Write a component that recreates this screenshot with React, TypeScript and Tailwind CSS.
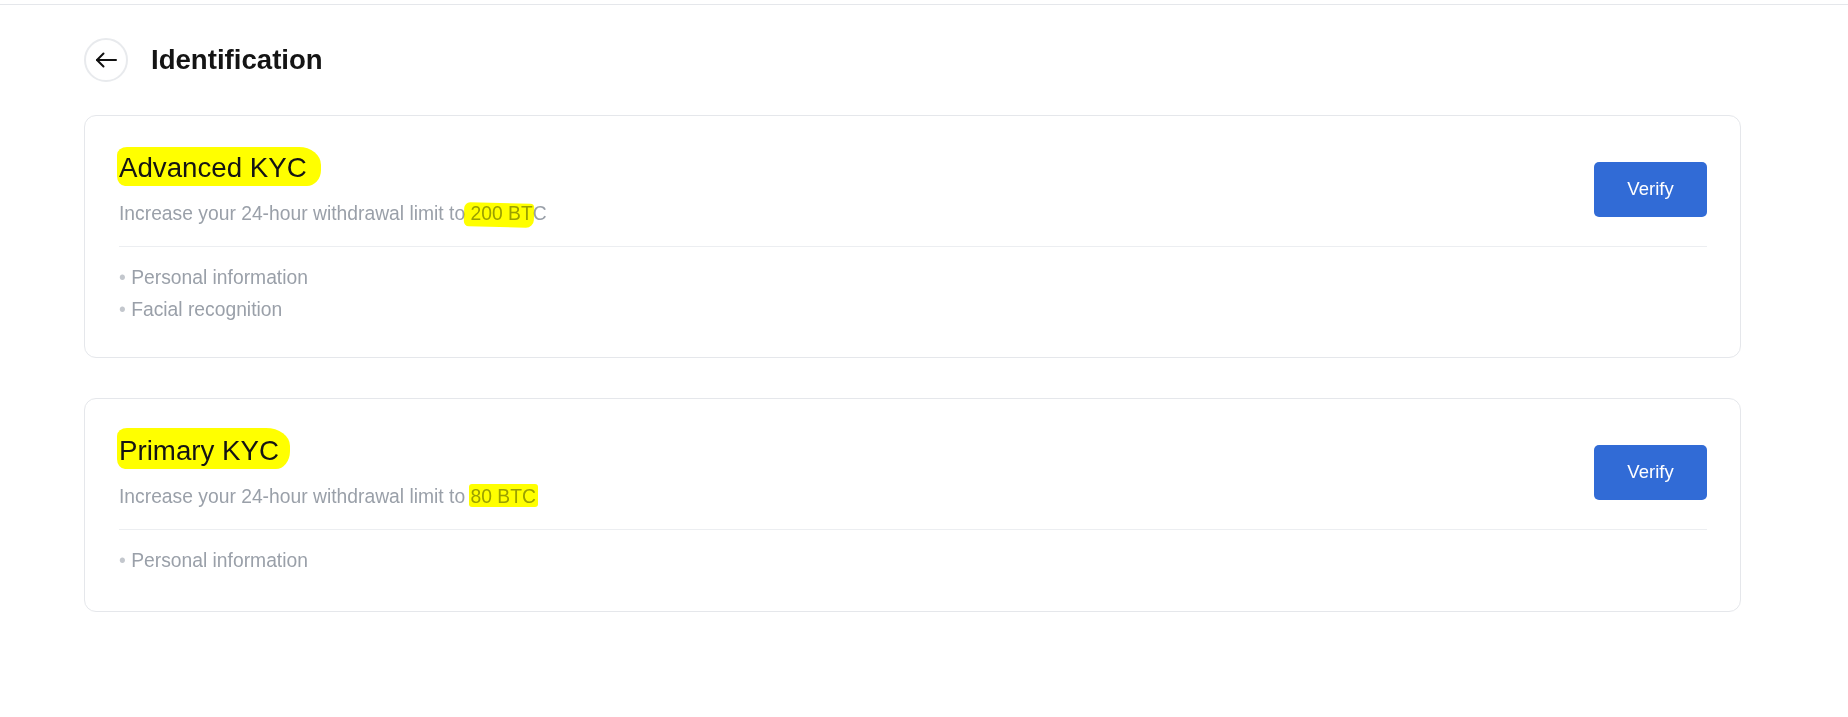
import React from "react";

type Hl = { left: number; top: number; width: number; height: number; radius: string; rotate?: number };

function Highlight({ h }: { h: Hl }) {
  return (
    <span
      className="pointer-events-none absolute bg-[#ffff00] mix-blend-multiply"
      style={{
        left: h.left,
        top: h.top,
        width: h.width,
        height: h.height,
        borderRadius: h.radius,
        transform: h.rotate ? `rotate(${h.rotate}deg)` : undefined,
      }}
    />
  );
}

type CardProps = {
  title: string;
  limit: string;
  items: string[];
  titleHl: Hl;
  limitHl: Hl;
  extraBottom?: boolean;
};

function KycCard({ title, limit, items, titleHl, limitHl, extraBottom }: CardProps) {
  return (
    <div
      className={
        "w-[1657px] rounded-[12px] border border-[#e5e7eb] bg-white pt-[36px] pl-[34px] pr-[33px] " +
        (extraBottom ? "pb-[34px]" : "pb-[31px]")
      }
    >
      <div className="flex items-center justify-between">
        <div>
          <div className="relative text-[27.7px] leading-[32px] text-[#141414]">
            <Highlight h={titleHl} />
            <span className="relative">{title}</span>
          </div>
          <div className="relative mt-[18px] text-[19.3px] leading-[24px] text-[#9aa0a9]">
            <Highlight h={limitHl} />
            <span>Increase your 24-hour withdrawal limit to {limit}</span>
          </div>
        </div>
        <button className="h-[55px] w-[113px] rounded-[5px] bg-[#316bd6] text-[18.5px] text-white">
          Verify
        </button>
      </div>
      <div className="mt-[20px] h-px bg-[#eceef1]" />
      <ul className="mt-[15px]">
        {items.map((it) => (
          <li key={it} className="text-[19.3px] leading-[32px] text-[#9aa0a9]">
            <span className="text-[#c3c7cd]">•</span> {it}
          </li>
        ))}
      </ul>
    </div>
  );
}

export default function App() {
  return (
    <div
      className="min-h-[717px] w-full bg-white"
      style={{ fontFamily: '"Liberation Sans", Arial, sans-serif' }}
    >
      <div className="h-[5px] border-b border-[#e5e7eb]" />
      <div className="pl-[84px]">
        <div className="mt-[33px] flex items-center gap-[23px]">
          <button className="flex h-[44px] w-[44px] items-center justify-center rounded-full border-2 border-[#e8eaed] bg-white text-[#111]">
            <svg width="22" height="16" viewBox="0 0 22 16" fill="none" stroke="currentColor" strokeWidth="2" strokeLinecap="round" strokeLinejoin="round">
              <path d="M2 8H21" />
              <path d="M8.5 1.5L2 8l6.5 6.5" />
            </svg>
          </button>
          <h1 className="text-[27.6px] font-bold leading-[32px] text-[#141414]">Identification</h1>
        </div>
        <div className="mt-[33px] flex flex-col gap-[40px]">
          <KycCard
            title="Advanced KYC"
            limit="200 BTC"
            items={["Personal information", "Facial recognition"]}
            titleHl={{ left: -2, top: -5, width: 204, height: 39, radius: "10px 22px 14px 8px / 8px 18px 16px 10px" }}
            limitHl={{ left: 345, top: 1, width: 70, height: 24, radius: "6px 4px 8px 5px", rotate: 1.5 }}
          />
          <KycCard
            title="Primary KYC"
            limit="80 BTC"
            items={["Personal information"]}
            titleHl={{ left: -2, top: -7, width: 173, height: 41, radius: "10px 24px 14px 8px / 8px 18px 18px 10px" }}
            limitHl={{ left: 350, top: -1, width: 69, height: 23, radius: "3px" }}
            extraBottom
          />
        </div>
      </div>
    </div>
  );
}
